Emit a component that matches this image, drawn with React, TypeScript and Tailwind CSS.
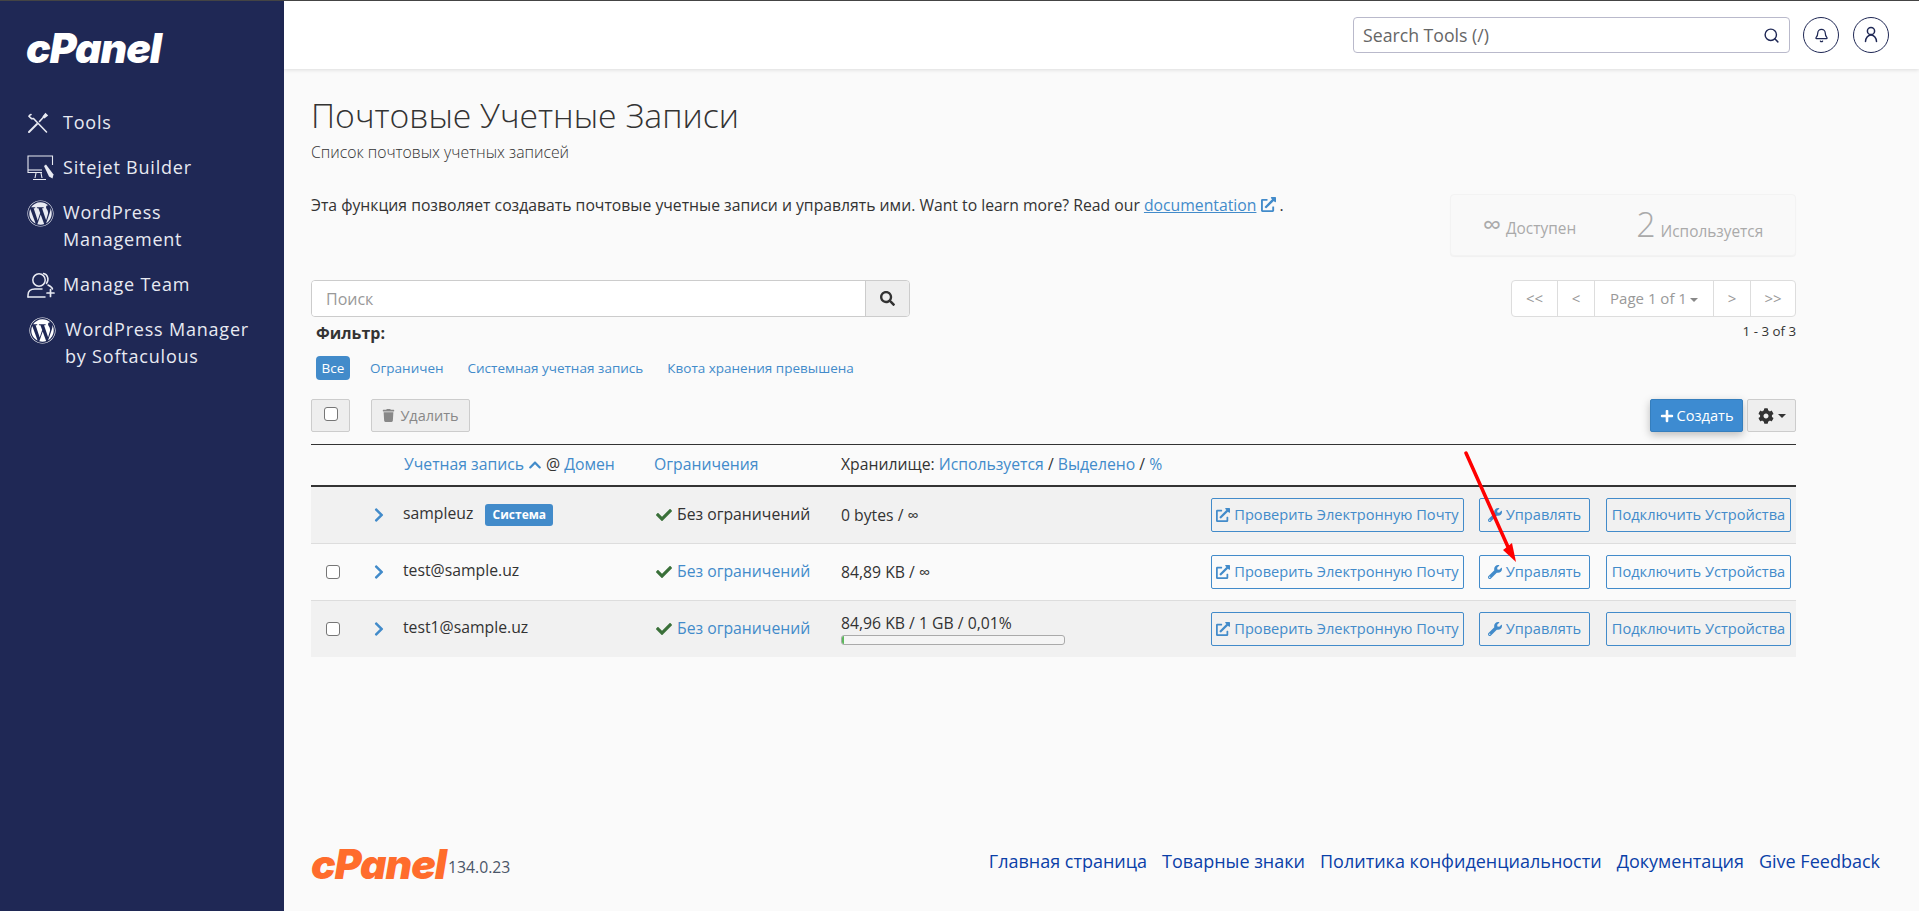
import React from 'react';
import { Bell, Search } from 'lucide-react';
import { FaWordpress, FaSearch, FaTrash, FaPlus, FaCog, FaCheck, FaChevronRight, FaChevronUp, FaWrench, FaExternalLinkAlt } from 'react-icons/fa';

const ToolsIcon = () => (
  <svg width="22" height="22" viewBox="0 0 22 22" fill="none" stroke="currentColor" strokeWidth="1.6" strokeLinecap="round">
    <path d="M4 2.500c-1 .4-1.800 1-2 1.800l2.500 2.400 2-.2L19.500 20" />
    <path d="M2 20l8-8" strokeWidth="2" />
    <path d="M12.500 9.500l5-5.500" strokeWidth="1.6" />
    <path d="M16.500 4.500l2-2.500 1.500 1.500-2.500 2z" fill="currentColor" />
  </svg>
);

const SitejetIcon = () => (
  <svg width="28" height="26" viewBox="0 0 28 26" fill="none" stroke="currentColor" strokeWidth="1.1">
    <path d="M25.500 10V1H1v16.500h14" />
    <path d="M1 15h14" />
    <path d="M9 18l-1 5M14 18l1 5M6 24.500h13" />
    <path d="M17 11l2-1.500 7.500 10-1 4-3.500-2z" fill="currentColor" stroke="none" />
  </svg>
);

const TeamIcon = () => (
  <svg width="28" height="26" viewBox="0 0 28 26" fill="none" stroke="currentColor" strokeWidth="1.5" strokeLinecap="round">
    <circle cx="12" cy="8" r="6.200" />
    <path d="M16.500 1.500c4 .5 6 6 3 10" />
    <path d="M1 25v-2c0-4 3-6 7-6h7" />
    <path d="M1 25h17" />
    <path d="M20 21h7M23.500 17.500v7" strokeWidth="1.700" />
    <path d="M21 13c2 1 4 2 4.500 4" />
  </svg>
);

const UserIcon = () => (
  <svg width="14" height="18" viewBox="0 0 14 18" fill="none" stroke="currentColor" strokeWidth="1.5">
    <circle cx="7" cy="5" r="3.600" />
    <path d="M1.500 15.500c0-3.500 2.500-6.500 5.500-6.500s5.500 3 5.500 6.500" strokeLinecap="round" />
  </svg>
);

const sideItems = [
  { icon: <ToolsIcon />, label: ['Tools'], boxClass: 'h-[28px]' },
  { icon: <SitejetIcon />, label: ['Sitejet Builder'], boxClass: 'h-[28px] mt-[17px]' },
  { icon: <FaWordpress size={27} />, label: ['WordPress', 'Management'], boxClass: 'h-[55px] mt-[17px]' },
  { icon: <TeamIcon />, label: ['Manage Team'], boxClass: 'h-[28px] mt-[17px]' },
  { icon: <FaWordpress size={27} className="text-white" />, label: ['WordPress Manager', 'by Softaculous'], boxClass: 'h-[55px] mt-[17px] pl-[2px]' },
];

const rows = [
  { name: 'sampleuz', badge: true, limitLink: false, storage: '0 bytes / ∞', checkbox: false, bar: false, rowClass: 'h-[56px] bg-[#f1f1f1]' },
  { name: 'test@sample.uz', badge: false, limitLink: true, storage: '84,89 KB / ∞', checkbox: true, bar: false, rowClass: 'h-[57px] bg-[#fafafa] border-t border-[#ddd]' },
  { name: 'test1@sample.uz', badge: false, limitLink: true, storage: '84,96 KB / 1 GB / 0,01%', checkbox: true, bar: true, rowClass: 'h-[57px] bg-[#f1f1f1] border-t border-[#ddd]' },
];

const Checkbox = () => (
  <span className="block w-[14px] h-[14px] rounded-[3px] border border-[#767676] bg-white" />
);

const ActionButton = ({ className, children }: { className: string; children: React.ReactNode }) => (
  <button className={`h-[34px] flex items-center justify-center gap-[4px] rounded-[2px] border border-[#428bca] text-[#428bca] text-[14.6px] ${className}`}>
    {children}
  </button>
);

export default function App() {
  return (
    <div className="relative flex h-[911px] overflow-hidden bg-[#fafafa] border-t border-[#444] font-['Open_Sans',sans-serif] text-[15.75px] text-[#333]">
      <aside className="w-[284px] shrink-0 bg-[#1f2855] text-[#e8eaf2]">
        <div className="pl-[26px] pt-[24px] h-[108px]">
          <span className="block font-['Inter',sans-serif] text-[41px] leading-[46px] font-black italic tracking-[-1px] text-white">cPanel</span>
        </div>
        <nav className="pl-[27px] text-[18px] leading-[27px] tracking-[0.8px]">
          {sideItems.map((item) => (
            <div key={item.label[0]} className={`flex items-start ${item.boxClass}`}>
              <span className="w-[36px] h-[28px] flex items-center justify-start">{item.icon}</span>
              <span>
                {item.label.map((line) => (
                  <span key={line} className="block whitespace-nowrap">{line}</span>
                ))}
              </span>
            </div>
          ))}
        </nav>
      </aside>

      <div className="flex-1 flex flex-col min-w-0">
        <header className="h-[68px] shrink-0 bg-white shadow-[0_1px_4px_rgba(0,0,0,0.12)] flex items-center justify-end pr-[30px] gap-[13px]">
          <div className="w-[437px] h-[36px] flex items-center justify-between rounded-[4px] border border-[#b9b9cb] bg-white pl-[9px] pr-[9px] text-[17.7px] text-[#666]">
            <span>Search Tools (/)</span>
            <Search size={17} className="text-[#1f2855]" strokeWidth={2} />
          </div>
          <div className="w-[36px] h-[36px] rounded-full border border-[#1f2855] flex items-center justify-center text-[#1f2855]">
            <Bell size={15} strokeWidth={2} />
          </div>
          <div className="w-[36px] h-[36px] ml-[1px] rounded-full border border-[#1f2855] flex items-center justify-center text-[#1f2855]">
            <UserIcon />
          </div>
        </header>

        <main className="flex-1 pl-[27px] pr-[123px] pt-[21px] flex flex-col">
          <h1 className="text-[33.75px] leading-[50px] font-light text-[#333]">Почтовые Учетные Записи</h1>
          <p className="mt-[2px] leading-[20px] font-light text-[#333]">Список почтовых учетных записей</p>

          <div className="mt-[32px] flex justify-between items-start">
            <p className="mt-[1px] leading-[20px]">
              Эта функция позволяет создавать почтовые учетные записи и управлять ими. Want to learn more? Read our{' '}
              <a className="text-[#428bca] underline">documentation</a>{' '}
              <FaExternalLinkAlt size={15} className="inline text-[#428bca] align-[-1px]" /> .
            </p>
            <div className="w-[346px] h-[62px] rounded-[4px] border border-[#f3f3f3] bg-[#f9f9f9] shadow-[0_1px_1px_rgba(0,0,0,0.04)] flex items-center justify-center gap-[60px] text-[15.4px] text-[#aaa]">
              <span className="flex items-baseline gap-[5px]"><span className="text-[26px] leading-[30px]">∞</span><span>Доступен</span></span>
              <span className="flex items-baseline gap-[5px]"><span className="text-[34px] leading-[36px] font-light">2</span><span>Используется</span></span>
            </div>
          </div>

          <div className="mt-[24px] flex justify-between items-start">
            <div>
              <div className="flex w-[599px] h-[37px] rounded-[4px] border border-[#ccc] overflow-hidden">
                <div className="flex-1 bg-white pl-[14px] flex items-center text-[16px] text-[#999]">Поиск</div>
                <div className="w-[44px] bg-[#eee] border-l border-[#ccc] flex items-center justify-center text-[#333]"><FaSearch size={15} /></div>
              </div>
              <div className="mt-[6px] ml-[5px] font-bold text-[16px] leading-[20px]">Фильтр:</div>
              <div className="mt-[13px] ml-[5px] flex items-center gap-[24px] text-[13.5px] text-[#428bca]">
                <span className="h-[24px] w-[34px] mr-[-4px] rounded-[4px] bg-[#428bca] text-white flex items-center justify-center">Все</span>
                <span>Ограничен</span>
                <span>Системная учетная запись</span>
                <span>Квота хранения превышена</span>
              </div>
            </div>
            <div className="flex flex-col items-end">
              <div className="flex h-[37px] rounded-[4px] border border-[#ddd] bg-white text-[#999] text-[15px]">
                <span className="w-[45px] flex items-center justify-center">&lt;&lt;</span>
                <span className="w-[37px] border-l border-[#ddd] flex items-center justify-center">&lt;</span>
                <span className="w-[119px] border-l border-[#ddd] flex items-center justify-center gap-[3px]">Page 1 of 1<span className="w-0 h-0 border-x-[4px] border-x-transparent border-t-[4px] border-t-[#888] mt-[2px]" /></span>
                <span className="w-[37px] border-l border-[#ddd] flex items-center justify-center">&gt;</span>
                <span className="w-[45px] border-l border-[#ddd] flex items-center justify-center">&gt;&gt;</span>
              </div>
              <div className="mt-[6px] text-[13.3px] leading-[17px] text-[#333]">1 - 3 of 3</div>
            </div>
          </div>

          <div className="mt-[19px] flex justify-between items-center">
            <div className="flex gap-[21px]">
              <div className="w-[39px] h-[33px] rounded-[2px] border border-[#ccc] bg-[#eee] flex justify-center pt-[7px]"><Checkbox /></div>
              <div className="w-[99px] h-[33px] rounded-[2px] border border-[#ccc] bg-[#eee] text-[#888] text-[14.5px] flex items-center justify-center gap-[5px]"><FaTrash size={13} />Удалить</div>
            </div>
            <div className="flex gap-[4px]">
              <div className="w-[93px] h-[33px] rounded-[2px] border border-[#357ebd] bg-[#3d8bd1] text-white text-[14.6px] flex items-center justify-center gap-[3px] shadow-[0_3px_8px_rgba(0,0,0,0.25)]"><FaPlus size={14} />Создать</div>
              <div className="w-[49px] h-[33px] rounded-[2px] border border-[#ccc] bg-[#eee] text-[#333] flex items-center justify-center gap-[4px]"><FaCog size={16} /><span className="w-0 h-0 border-x-[4px] border-x-transparent border-t-[4px] border-t-[#333]" /></div>
            </div>
          </div>

          <div className="mt-[12px] border-t border-[#333]">
            <div className="h-[42px] border-b-[2px] border-[#333] grid grid-cols-[93px_250px_187px_1fr] items-center">
              <span />
              <span className="text-[#428bca] flex items-center gap-[4px] whitespace-nowrap">Учетная запись <FaChevronUp size={14} /> <span className="text-[#333]">@</span> Домен</span>
              <span className="text-[#428bca]">Ограничения</span>
              <span>Хранилище: <span className="text-[#428bca]">Используется</span> / <span className="text-[#428bca]">Выделено</span> / <span className="text-[#428bca]">%</span></span>
            </div>
            {rows.map((row) => (
              <div key={row.name} className={`grid grid-cols-[49px_43px_251px_187px_1fr] items-center ${row.rowClass}`}>
                <span className="pl-[15px]">{row.checkbox && <Checkbox />}</span>
                <FaChevronRight size={16} className="text-[#428bca] ml-[11px]" />
                <span className="flex items-center gap-[12px] mt-[-2px]">
                  {row.name}
                  {row.badge && <span className="h-[22px] w-[68px] mt-[2px] rounded-[3px] bg-[#428bca] text-white text-[12px] font-bold flex items-center justify-center">Система</span>}
                </span>
                <span className="flex items-center gap-[5px] pl-[2px]">
                  <FaCheck size={16} className="text-[#3a7039]" />
                  <span className={row.limitLink ? 'text-[#428bca]' : ''}>Без ограничений</span>
                </span>
                <div className="flex items-center justify-between pr-[5px]">
                  <div className="w-[224px]">
                    <div className="leading-[20px] whitespace-nowrap">{row.storage}</div>
                    {row.bar && (
                      <div className="h-[10px] mt-[2px] rounded-[3px] border border-[#aaa] bg-[#f5f5f5] overflow-hidden">
                        <div className="h-full w-[2px] bg-[#5cb85c]" />
                      </div>
                    )}
                  </div>
                  <div className="flex gap-[15px]">
                    <ActionButton className="w-[253px]"><FaExternalLinkAlt size={14} />Проверить Электронную Почту</ActionButton>
                    <ActionButton className="w-[111px]"><FaWrench size={14} />Управлять</ActionButton>
                    <ActionButton className="w-[185px] ml-[1px]">Подключить Устройства</ActionButton>
                  </div>
                </div>
              </div>
            ))}
          </div>
        </main>

        <footer className="shrink-0 h-[67px] pl-[27px] pr-[39px] flex items-start justify-between">
          <div className="flex items-end mt-[-3px]">
            <span className="font-['Inter',sans-serif] text-[41px] leading-[46px] font-black italic tracking-[-1px] text-[#ff6c2c]">cPanel</span>
            <span className="ml-[2px] mb-[7px] text-[#4a5568] text-[15.75px]">134.0.23</span>
          </div>
          <div className="flex gap-[15px] text-[18px] text-[#0a3fa8] mt-[4px]">
            <a>Главная страница</a>
            <a>Товарные знаки</a>
            <a>Политика конфиденциальности</a>
            <a>Документация</a>
            <a>Give Feedback</a>
          </div>
        </footer>
      </div>

      {/* red annotation arrow drawn over the table */}
      <svg className="absolute left-[1460px] top-[449px] pointer-events-none" width="64" height="114" viewBox="0 0 64 114" fill="none">
        <path d="M6 3L48 97" stroke="#ff0000" strokeWidth="3.500" strokeLinecap="round" />
        <path d="M56 112L43 100L52 93z" fill="#ff0000" />
      </svg>
    </div>
  );
}
